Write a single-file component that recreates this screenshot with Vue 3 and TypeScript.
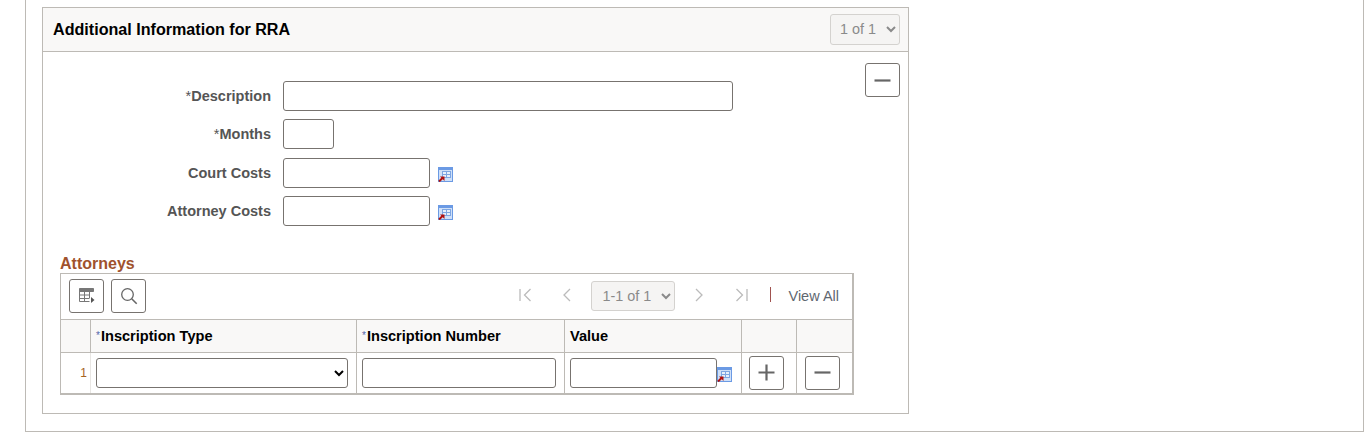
<script setup lang="ts">
const fields = [
  { label: 'Description', req: true, cls: 'w-desc', calc: false },
  { label: 'Months', req: true, cls: 'w-months', calc: false },
  { label: 'Court Costs', req: false, cls: 'w-cost', calc: true },
  { label: 'Attorney Costs', req: false, cls: 'w-cost', calc: true },
]
</script>

<template>
  <div class="page">
    <div class="outer">
      <section class="box">
        <header class="box-head">
          <h2>Additional Information for RRA</h2>
          <select class="pager" disabled><option>1 of 1</option></select>
        </header>
        <div class="box-body">
          <button class="btn collapse" aria-label="Collapse">
            <svg width="17" height="17" viewBox="0 0 17 17"><path d="M0.500 8.500h16" stroke="#666" stroke-width="2.200" /></svg>
          </button>
          <div class="form">
            <div v-for="f in fields" :key="f.label" class="row">
              <label><span v-if="f.req" class="star">*</span>{{ f.label }}</label>
              <input :class="f.cls" type="text" />
              <svg v-if="f.calc" class="calc" width="15" height="15" viewBox="0 0 15 15">
                <rect x="0.5" y="0.5" width="14" height="14" fill="#cfe0f8" stroke="#6b9ae4" />
                <rect x="0" y="0" width="15" height="3" fill="#6b9ae4" />
                <rect x="4.500" y="4.500" width="8" height="6" fill="#e6effb" stroke="#7ea6e2" />
                <path d="M4.500 7.500h8M8.500 4.500v6" stroke="#7ea6e2" />
                <path d="M1 14.500l3.500-3.500" stroke="#b01010" stroke-width="2" />
                <path d="M2 9.500h4.500V14Z" fill="#b01010" />
              </svg>
            </div>
          </div>
          <h3>Attorneys</h3>
          <div class="grid">
            <div class="toolbar">
              <button class="btn tool" aria-label="Personalize">
                <svg width="16" height="16" viewBox="0 0 16 16" fill="none" stroke="#777">
                  <path d="M0.500 0.500h14v3h-14z" fill="#777" />
                  <path d="M0.500 3v10.500h10M0.500 7h10M0.500 10.500h10M5.500 3v10.500M10.500 3v7" />
                  <path d="M12 9l3.500 3L12 15z" fill="#555" stroke="none" />
                </svg>
              </button>
              <button class="btn tool" aria-label="Find">
                <svg width="18" height="18" viewBox="0 0 18 18" fill="none" stroke="#666" stroke-width="1.300">
                  <circle cx="7.500" cy="7.500" r="5.800" />
                  <path d="M11.700 11.700l5 5" stroke-width="1.600" />
                </svg>
              </button>
              <div class="nav">
                <svg class="nic first" width="13" height="14" viewBox="0 0 13 14" fill="none" stroke="#bbb" stroke-width="1.300"><path d="M1 1v12M11.500 1l-6 6 6 6" /></svg>
                <svg class="nic prev" width="9" height="14" viewBox="0 0 9 14" fill="none" stroke="#bbb" stroke-width="1.300"><path d="M8 1L2 7l6 6" /></svg>
                <select class="pager small" disabled><option>1-1 of 1</option></select>
                <svg class="nic next" width="9" height="14" viewBox="0 0 9 14" fill="none" stroke="#bbb" stroke-width="1.300"><path d="M1 1l6 6-6 6" /></svg>
                <svg class="nic last" width="13" height="14" viewBox="0 0 13 14" fill="none" stroke="#bbb" stroke-width="1.300"><path d="M12 1v12M1.500 1l6 6-6 6" /></svg>
                <span class="sep"></span>
                <a class="viewall">View All</a>
              </div>
            </div>
            <div class="tbl">
              <div class="th"></div>
              <div class="th"><span class="mini">*</span>Inscription Type</div>
              <div class="th"><span class="mini">*</span>Inscription Number</div>
              <div class="th">Value</div>
              <div class="th"></div>
              <div class="th last-col"></div>
              <div class="td num">1</div>
              <div class="td"><select class="cell-select"><option></option></select></div>
              <div class="td"><input class="cell-num" type="text" /></div>
              <div class="td value">
                <input class="cell-val" type="text" />
                <svg class="calc-cell" width="15" height="15" viewBox="0 0 15 15">
                  <rect x="0.5" y="0.5" width="14" height="14" fill="#cfe0f8" stroke="#6b9ae4" />
                  <rect x="0" y="0" width="15" height="3" fill="#6b9ae4" />
                  <rect x="4.500" y="4.500" width="8" height="6" fill="#e6effb" stroke="#7ea6e2" />
                  <path d="M4.500 7.500h8M8.500 4.500v6" stroke="#7ea6e2" />
                  <path d="M1 14.500l3.500-3.500" stroke="#b01010" stroke-width="2" />
                  <path d="M2 9.500h4.500V14Z" fill="#b01010" />
                </svg>
              </div>
              <div class="td center">
                <button class="btn tool" aria-label="Add">
                  <svg width="17" height="17" viewBox="0 0 17 17"><path d="M0.500 8.500h16M8.500 0.500v16" stroke="#666" stroke-width="2.200" /></svg>
                </button>
              </div>
              <div class="td center last-col">
                <button class="btn tool" aria-label="Delete">
                  <svg width="17" height="17" viewBox="0 0 17 17"><path d="M0.500 8.500h16" stroke="#666" stroke-width="2.200" /></svg>
                </button>
              </div>
            </div>
          </div>
        </div>
      </section>
    </div>
  </div>
</template>

<style>
html, body { margin: 0; background: #fff; }
</style>

<style scoped>
.page {
  width: 1368px;
  height: 436px;
  overflow: hidden;
  font-family: "Liberation Sans", Arial, sans-serif;
  box-sizing: border-box;
  padding-left: 25px;
}
.outer {
  width: 1339px;
  height: 432px;
  box-sizing: border-box;
  border-left: 1px solid #bdbab5;
  border-right: 1px solid #bdbab5;
  border-bottom: 1px solid #bdbab5;
  padding: 7px 0 0 16px;
}
.box {
  width: 867px;
  height: 407px;
  box-sizing: border-box;
  border: 1px solid #bdbab5;
}
.box-head {
  height: 43px;
  background: #f9f8f7;
  border-bottom: 1px solid #bdbab5;
  display: flex;
  align-items: center;
  justify-content: space-between;
  padding: 0 8px 0 10px;
  box-sizing: content-box;
}
h2 {
  margin: 0;
  font-size: 16.13px;
  font-weight: bold;
  color: #000;
}
.pager {
  width: 70px;
  height: 31px;
  border: 1px solid #d4d2cf;
  border-radius: 3px;
  background-color: #f5f4f3;
  color: #8a8a8a;
  font: 14.400px "Liberation Sans", Arial, sans-serif;
  opacity: 1;
  padding: 0 0 0 5px;
  margin-top: -1px;
}
.pager.small {
  width: 84px;
  height: 30px;
  margin: 0 20px 0 0;
  padding-left: 6px;
}
.box-body {
  position: relative;
  padding: 29.200px 0 0 17px;
}
.btn {
  box-sizing: border-box;
  display: inline-flex;
  align-items: center;
  justify-content: center;
  width: 35px;
  height: 34px;
  padding: 0;
  background: #fff;
  border: 1px solid #77736f;
  border-radius: 3px;
}
.collapse {
  position: absolute;
  top: 11px;
  right: 8px;
}
.form {
  display: flex;
  flex-direction: column;
}
.row {
  display: flex;
  align-items: center;
  height: 38.330px;
}
.row label {
  width: 211px;
  margin: -9px 12px 0 0;
  text-align: right;
  font-size: 14.500px;
  font-weight: bold;
  color: #555;
}
.star {
  font-weight: normal;
}
input, .cell-select {
  box-sizing: border-box;
  height: 30px;
  background: #fff;
  border: 1px solid #77736f;
  border-radius: 3px;
  padding: 0 4px;
  margin: 0;
}
.w-desc { width: 450px; }
.w-months { width: 51px; }
.w-cost { width: 147px; }
.row input { margin-bottom: 9px; }
.calc {
  margin: 0 0 6px 8px;
}
h3 {
  margin: 19.480px 0 0 0;
  height: 19px;
  line-height: 20px;
  font-size: 16px;
  font-weight: bold;
  color: #a0522d;
}
.grid {
  width: 794px;
  height: 122px;
  box-sizing: border-box;
  border: 1px solid #bdbab5;
  border-bottom-width: 2px;
  border-right-width: 2px;
}
.toolbar {
  height: 45px;
  display: flex;
  align-items: center;
  gap: 7px;
  padding-left: 8px;
  border-bottom: 1px solid #bdbab5;
  box-sizing: content-box;
}
.nav {
  margin-left: auto;
  display: flex;
  align-items: center;
}
.nic { margin-top: -2px; }
.first { margin-right: 30px; }
.prev { margin-right: 20px; }
.next { margin-right: 31px; }
.last { margin-right: 22px; }
.sep {
  width: 1px;
  height: 15px;
  background: #a0524f;
  margin: -3px 17px 0 0;
}
.viewall {
  font-size: 14.500px;
  color: #5f6770;
  margin: -1px 13px 0 0;
}
.tbl {
  display: grid;
  grid-template-columns: 30px 266px 208px 177px 55px 55px;
  grid-template-rows: 33px 40px;
}
.th {
  box-sizing: border-box;
  background: #f9f8f7;
  border-right: 1px solid #bdbab5;
  border-bottom: 1px solid #bdbab5;
  font-size: 14.600px;
  font-weight: bold;
  color: #000;
  display: flex;
  align-items: center;
  padding-left: 5px;
}
.mini {
  font-size: 10px;
  font-weight: normal;
  color: #5566aa;
  margin-right: 1px;
}
.td {
  box-sizing: border-box;
  border-right: 1px solid #bdbab5;
  display: flex;
  align-items: center;
  padding-left: 5px;
}
.last-col { border-right: none; }
.num {
  justify-content: flex-end;
  padding: 0 3px 0 0;
  font-size: 12px;
  color: #a5631f;
  border-right-color: #e8e6e3;
}
.center {
  padding-left: 7px;
}
.last-col.center {
  padding-left: 8px;
}
.cell-select {
  width: 252px;
  padding: 0 0 0 4px;
  color: #000;
}
.cell-num { width: 194px; }
.cell-val { width: 147px; }
.value { position: relative; }
.calc-cell {
  position: absolute;
  left: 152px;
  top: 14px;
}
</style>
